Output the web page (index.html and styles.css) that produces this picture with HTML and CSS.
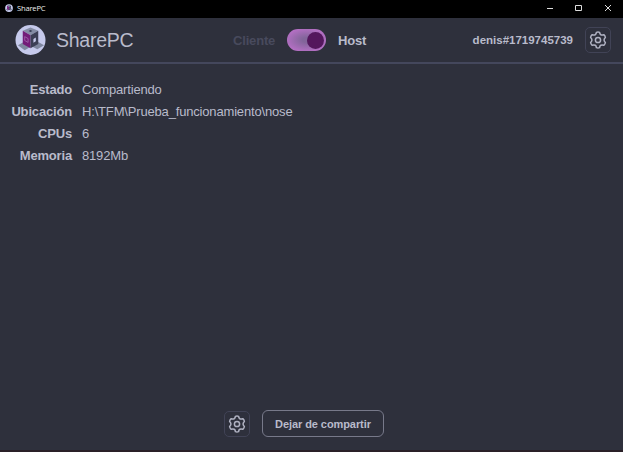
FILE: index.html
```html
<!DOCTYPE html>
<html lang="es">
<head>
<meta charset="utf-8">
<title>SharePC</title>
<link rel="stylesheet" href="styles.css">
</head>
<body>
<svg class="defs" width="0" height="0">
  <symbol id="gear" viewBox="0 0 18 18">
    <path d="M7.4 1.4Q9 .8 10.6 1.4Q10.9 4.9 14.8 3.7Q16.2 4.8 16.4 6.5Q13.7 9 16.4 11.5Q16.2 13.2 14.8 14.3Q10.9 13.1 10.6 16.6Q9 17.2 7.4 16.6Q7.1 13.1 3.2 14.3Q1.8 13.2 1.6 11.5Q4.3 9 1.6 6.5Q1.8 4.8 3.2 3.7Q7.1 4.9 7.4 1.4z"/>
    <circle cx="9" cy="9" r="2.6"/>
  </symbol>
  <symbol id="logo" viewBox="0 0 32 32">
    <circle cx="16" cy="16" r="15.5" fill="#c6caec"/>
    <path d="M3 21.5l6-3.5 7 4 8-4 6 3.5-7 4-6-3-7 4z" fill="#7f879f"/>
    <path d="M16 3l8 3.5-8 4.5-8-4.5z" fill="#858da5"/>
    <path d="M8 6.5l8 4.5v13.5l-8-4.5z" fill="#731c78"/>
    <path d="M24 6.5l-8 4.5v13.5l8-4.5z" fill="#3c3f55"/>
    <path d="M14 6.8l2-1 2 1-2 1z" fill="#333850"/>
    <path d="M10 12.5l3.5 2v4l-3.5-2z" fill="none" stroke="#a46bb0" stroke-width=".8"/>
    <path d="M19 15l2.5-1.5v3.8l-2.5 1.5z" fill="#c6caec"/>
  </symbol>
</svg>
<div class="titlebar">
  <svg class="app-icon"><use href="#logo"/></svg>
  <span>SharePC</span>
  <svg class="controls" width="66" height="10" viewBox="0 0 66 10">
    <path d="M0 5.5h6M28.5 2.5h6v5h-6zM58 2l6 6M64 2l-6 6"/>
  </svg>
</div>
<header>
  <svg class="logo"><use href="#logo"/></svg>
  <h1>SharePC</h1>
  <div class="mode">
    <span class="off">Cliente</span>
    <div class="switch"><i></i></div>
    <span>Host</span>
  </div>
  <span class="user">denis#1719745739</span>
  <button class="icon-button"><svg><use href="#gear"/></svg></button>
</header>
<main>
  <dl>
    <dt>Estado</dt><dd>Compartiendo</dd>
    <dt>Ubicación</dt><dd>H:\TFM\Prueba_funcionamiento\nose</dd>
    <dt>CPUs</dt><dd>6</dd>
    <dt>Memoria</dt><dd>8192Mb</dd>
  </dl>
  <div class="actions">
    <button class="icon-button"><svg><use href="#gear"/></svg></button>
    <button class="stop">Dejar de compartir</button>
  </div>
</main>
</body>
</html>
```
FILE: styles.css
```css
* { box-sizing: border-box; }
body {
  margin: 0;
  height: 452px;
  display: flex;
  flex-direction: column;
  overflow: hidden;
  background: #2e303c;
  color: #b9bbcb;
  font-family: "Liberation Sans", Arial, sans-serif;
  border-bottom: 2px solid #2a2028;
}
.defs { position: absolute; }
.titlebar {
  height: 18px;
  flex: none;
  display: flex;
  align-items: center;
  padding: 0 10px 3px 5px;
  background: #000;
  color: #eee;
  font: 7.6px "Open Sans", sans-serif;
  letter-spacing: -0.2px;
}
.app-icon { width: 8px; height: 8px; margin-right: 4px; }
.controls {
  margin-left: auto;
  fill: none;
  stroke: #ddd;
  stroke-width: 1;
}
header {
  height: 46px;
  flex: none;
  display: flex;
  align-items: center;
  padding: 0 12px 0 15px;
  border-bottom: 2px solid #44475c;
}
.logo { width: 31px; height: 32px; }
h1 {
  width: 177px;
  margin: 0 0 0 10px;
  font-size: 19.5px;
  font-weight: 400;
  letter-spacing: -0.25px;
}
.mode {
  display: flex;
  align-items: center;
  font-size: 13px;
  font-weight: 700;
  letter-spacing: -0.17px;
}
.mode .off { width: 54px; color: #484a5d; }
.switch {
  width: 39px;
  height: 22px;
  margin-right: 12px;
  padding: 2px;
  display: flex;
  align-items: center;
  justify-content: flex-end;
  border-radius: 11px;
  background: radial-gradient(ellipse at center, #82659a 15%, #b36fc3 75%);
}
.switch i {
  width: 17px;
  height: 17px;
  border-radius: 50%;
  background: #54175d;
}
.user {
  margin-left: auto;
  font-size: 11.5px;
  font-weight: 700;
}
button { font-family: inherit; color: inherit; background: none; }
.icon-button {
  width: 26px;
  height: 26px;
  margin-left: 12px;
  padding: 0;
  display: grid;
  place-items: center;
  border: 1px solid #414356;
  border-radius: 5px;
}
.icon-button svg {
  width: 18px;
  height: 18px;
  fill: none;
  stroke: #b0b2c2;
  stroke-width: 1.5;
  stroke-linejoin: round;
}
main {
  flex: 1;
  display: flex;
  flex-direction: column;
  justify-content: space-between;
  padding: 14px 0 13px;
}
dl {
  margin: 0;
  display: grid;
  grid-template-columns: 72px 1fr;
  grid-auto-rows: 22.2px;
  column-gap: 10px;
  align-items: center;
  font-size: 13px;
  letter-spacing: -0.17px;
}
dt { text-align: right; font-weight: 700; }
dd { margin: 0; }
.actions {
  display: flex;
  align-items: center;
  padding-left: 212px;
}
.stop {
  width: 122px;
  height: 27px;
  margin-left: 12px;
  padding: 0;
  border: 1px solid #77798a;
  border-radius: 6px;
  font-size: 11px;
  font-weight: 700;
  letter-spacing: -0.08px;
}
```
